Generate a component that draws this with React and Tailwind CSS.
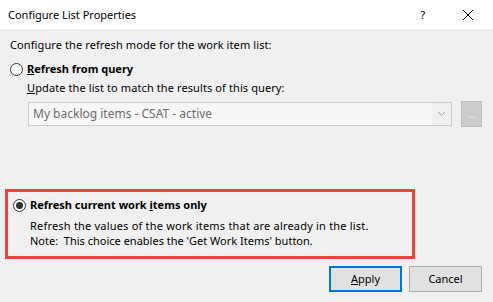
export default function App() {
  const font = { fontFamily: '"Noto Sans", "Open Sans", sans-serif' };
  return (
    <div className="w-[493px] h-[302px] bg-[#f0f0f0] text-[11px] text-black flex flex-col overflow-hidden" style={font}>
      <div className="h-[29px] bg-white flex items-center pl-[8px] shrink-0 text-[11px]">
        <span className="flex-1 leading-[16px]">Configure List Properties</span>
        <span className="w-[10px] text-center leading-[16px] mr-[34px]">?</span>
        <svg width="12" height="12" viewBox="0 0 12 12" className="mr-[19px]">
          <path d="M1 1 L11 11 M11 1 L1 11" stroke="#000" strokeWidth="1" fill="none" />
        </svg>
      </div>
      <div className="flex flex-col px-[10px]">
        <div className="mt-[8px] leading-[16px] tracking-[0.1px]">Configure the refresh mode for the work item list:</div>
        <div className="mt-[8px] h-[16px] flex items-center">
          <span className="w-[13px] h-[13px] rounded-full border border-[#333] bg-white shrink-0"></span>
          <span className="ml-[4px] font-bold leading-[16px]"><span className="underline">R</span>efresh from query</span>
        </div>
        <div className="mt-[3px] ml-[17px] leading-[16px] tracking-[0.1px]"><span className="underline">U</span>pdate the list to match the results of this query:</div>
        <div className="mt-[5px] ml-[18px] flex items-center">
          <div className="w-[424px] h-[24px] border border-[#cccccc] bg-[#f0f0f0] flex items-center">
            <span className="flex-1 h-full bg-[#f7f7f7] pl-[4px] text-[#6d6d6d] text-[12px] leading-[22px]">My backlog items - CSAT - active</span>
            <svg width="19" height="10" viewBox="0 0 19 10" className="shrink-0">
              <path d="M6 3 L9.5 6.5 L13 3" stroke="#a0a0a0" strokeWidth="1" fill="none" />
            </svg>
          </div>
          <div className="ml-[9px] w-[21px] h-[26px] bg-[#cccccc] border border-[#bfbfbf] flex items-center justify-center text-[#f0f0f0] text-[10px] leading-none">...</div>
        </div>
      </div>
      <div className="ml-[5px] mt-[62px] w-[410px] h-[70px] border-[3px] border-[#e8453c] pl-[5px] pt-[5px]">
        <div className="h-[16px] flex items-center">
          <span className="w-[13px] h-[13px] rounded-full border border-[#333] bg-white shrink-0 flex items-center justify-center">
            <span className="w-[7px] h-[7px] rounded-full bg-[#333]"></span>
          </span>
          <span className="ml-[4px] font-bold leading-[16px]">Refresh current work <span className="underline">i</span>tems only</span>
        </div>
        <div className="ml-[17px] mt-[5px] leading-[15px] tracking-[0.2px]">Refresh the values of the work items that are already in the list.</div>
        <div className="ml-[17px] leading-[15px]">Note:&nbsp; This choice enables the 'Get Work Items' button.</div>
      </div>
      <div className="mt-[7px] flex justify-end pr-[11px] gap-[7px]">
        <button className="w-[73px] h-[26px] bg-[#e1e1e1] border-2 border-[#0078d7] leading-[16px]"><span className="underline">A</span>pply</button>
        <button className="w-[73px] h-[26px] bg-[#e1e1e1] border border-[#adadad] leading-[16px]">Cancel</button>
      </div>
    </div>
  );
}
